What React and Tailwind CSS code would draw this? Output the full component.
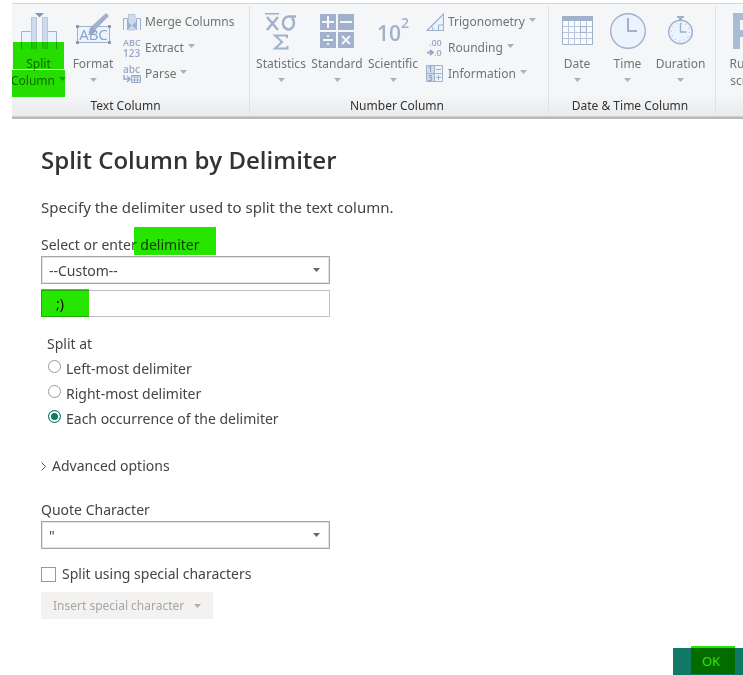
import React from "react";

const LINE = "#a1b1cb";
const FILL = "#eaf3fe";

function Caret({ className = "" }) {
  return (
    <svg width="7" height="4" viewBox="0 0 7 4" className={`shrink-0 ${className}`} aria-hidden="true">
      <path d="M0 0h7L3.500 4z" fill="currentColor" />
    </svg>
  );
}

function Highlight({ className }) {
  return <span aria-hidden="true" className={`pointer-events-none absolute bg-[#26e600] mix-blend-multiply ${className}`} />;
}

function SplitIcon() {
  return (
    <svg width="38" height="37" viewBox="0 0 38 37" aria-hidden="true">
      <path d="M1 19h10v17H1zM27 19h10v17H27z" fill={FILL} />
      <path d="M1.500 36V18.500h9M36.500 36V18.500h-9" fill="none" stroke={LINE} />
      <path d="M11.500 36V4.500h5V36M22.500 36V4.500h5V36" fill="#cedbed" stroke="#b7c6dd" />
      <path d="M15 0h9l-4.500 4.500z" fill="#8296b9" />
    </svg>
  );
}

function FormatIcon() {
  return (
    <svg width="36" height="37" viewBox="0 0 36 37" aria-hidden="true">
      <path d="M2.500 13.500h32v16h-32z" fill={FILL} stroke={LINE} />
      <text x="18.500" y="27" textAnchor="middle" fontFamily="Open Sans, sans-serif" fontSize="15" fill="#8da2c4">ABC</text>
      <path d="M1 12h3v3H1zM33 12h3v3h-3zM1 28h3v3H1zM33 28h3v3h-3z" fill="#879cc0" />
      <path d="M31 0l3 3-13 13-4-3z" fill={LINE} />
      <path d="M17 13l4 3c-1 5-4 6-8 6 2-2 0-6 4-9z" fill="#94a7c7" />
    </svg>
  );
}

function StatisticsIcon() {
  return (
    <svg width="34" height="37" viewBox="0 0 34 37" fill="none" stroke={LINE} strokeWidth="2.500" aria-hidden="true">
      <path d="M1 .750h14" strokeWidth="1.500" />
      <path d="M3 4l11 13M14 4L3 17" />
      <path d="M32 3.500h-7a5.500 6.500 0 1 0 3 1.500" />
      <path d="M23 25v-2.500H11l7 6.500-7 6.500h12.500v-2.500" strokeWidth="2" />
    </svg>
  );
}

function StandardIcon() {
  return (
    <svg width="34" height="37" viewBox="0 0 34 37" aria-hidden="true">
      <path d="M0 1h16v16H0zM18 1h16v16H18zM0 19h16v16H0zM18 19h16v16H18z" fill={LINE} />
      <path d="M2 9h12M8 3v12M20 9h12M3 27h10M22 23l8 8M30 23l-8 8" stroke="#f4f6f8" strokeWidth="2" />
      <path d="M7 22h2v2H7zM7 30h2v2H7z" fill="#f4f6f8" />
    </svg>
  );
}

function ScientificIcon() {
  return (
    <svg width="34" height="37" viewBox="0 0 34 37" className="overflow-visible" fontFamily="Open Sans, sans-serif" fontWeight="600" fill={LINE} aria-hidden="true">
      <text x="1" y="28" fontSize="21">10</text>
      <text x="25" y="15" fontSize="14">2</text>
    </svg>
  );
}

function DateIcon() {
  return (
    <svg width="31" height="37" viewBox="0 0 31 37" aria-hidden="true">
      <path d="M.5 3.500h30v28H.5z" fill="#f7fbff" stroke={LINE} />
      <path d="M0 3h31v5H0z" fill={LINE} />
      <path d="M6.500 8v24M12.500 8v24M18.500 8v24M24.500 8v24M1 13.500h29M1 19.500h29M1 25.500h29" stroke="#b7c6db" />
      <path d="M18.500 13.500h6v6h-6z" fill={FILL} stroke={LINE} />
    </svg>
  );
}

function TimeIcon() {
  return (
    <svg width="36" height="37" viewBox="0 0 36 37" aria-hidden="true">
      <circle cx="18" cy="18" r="17.300" fill={FILL} stroke={LINE} strokeWidth="1.400" />
      <path d="M18 5v13h9" fill="none" stroke={LINE} strokeWidth="2" />
    </svg>
  );
}

function DurationIcon() {
  return (
    <svg width="26" height="37" viewBox="0 0 26 37" aria-hidden="true">
      <path d="M9 3h7v2h-2v3h-3V5H9z" fill={LINE} />
      <circle cx="12.500" cy="19" r="11.800" fill={FILL} stroke={LINE} strokeWidth="1.500" />
      <circle cx="12.500" cy="19" r="9" fill="none" stroke={LINE} strokeDasharray="1 3.710" />
      <path d="M12.500 10v9h6" fill="none" stroke={LINE} strokeWidth="1.400" />
    </svg>
  );
}

function RIcon() {
  return (
    <svg width="27" height="37" viewBox="0 0 27 37" aria-hidden="true">
      <path d="M3.500 36V3.500H14a8 8 0 0 1 0 17H4M14 20l9 16" fill="none" stroke="#aabbd5" strokeWidth="7" />
    </svg>
  );
}

function MergeIcon() {
  return (
    <svg width="18" height="18" viewBox="0 0 18 18" aria-hidden="true">
      <path d="M.5 17V5.500h4V17M17.500 17V5.500h-4V17" fill={FILL} stroke={LINE} />
      <path d="M5.500 17V1.500h6.500V17z" fill="#cedbed" stroke="#b7c6dd" />
      <path d="M5 9l4 3.500L5 16zM13 9l-4 3.500 4 3.500z" fill={LINE} />
    </svg>
  );
}

function ExtractIcon() {
  return (
    <svg width="18" height="20" viewBox="0 0 18 20" className="overflow-visible" fontFamily="Open Sans, sans-serif" fontWeight="600" fill="#96a9c8" aria-hidden="true">
      <text x="0" y="8" fontSize="9">ABC</text>
      <text x="0" y="19" fontSize="10">123</text>
    </svg>
  );
}

function ParseIcon() {
  return (
    <svg width="18" height="20" viewBox="0 0 18 20" className="overflow-visible" fontFamily="Open Sans, sans-serif" fontWeight="600" fill="#96a9c8" aria-hidden="true">
      <text x="0" y="9" fontSize="10">abc</text>
      <path d="M1 11v4h5M4 12l3 3-3 3" fill="none" stroke="#96a9c8" strokeWidth="1.500" />
      <path d="M8.500 11.500h9v7h-9zM8 13h10M11.500 13v6M14.500 13v6M8 16h10" fill="none" stroke="#96a9c8" />
    </svg>
  );
}

function TrigIcon() {
  return (
    <svg width="18" height="18" viewBox="0 0 18 18" fill="none" stroke={LINE} aria-hidden="true">
      <path d="M1 17.500L17.500 1v16.500z" fill={FILL} strokeWidth="1.200" />
      <path d="M12.500 17v-5H17M5 13c2 1 2 3 2 4" />
    </svg>
  );
}

function RoundingIcon() {
  return (
    <svg width="18" height="20" viewBox="0 0 18 20" className="overflow-visible" fontFamily="Open Sans, sans-serif" fontWeight="600" fill="#96a9c8" aria-hidden="true">
      <text x="3" y="8" fontSize="9">.00</text>
      <text x="8" y="18" fontSize="9">.0</text>
      <path d="M1 14.500h6M4 12l3 2.500L4 17" fill="none" stroke="#96a9c8" strokeWidth="1.800" />
    </svg>
  );
}

function InfoIcon() {
  return (
    <svg width="18" height="18" viewBox="0 0 18 18" className="overflow-visible" aria-hidden="true">
      <path d="M.5.500h16v16H.500z" fill={FILL} stroke={LINE} />
      <path d="M1 1h7v15H1z" fill="#cedbed" />
      <path d="M8.500 1v15M1 8.500h15M10 4.500h5M10 12.500h5M12.500 10v5" stroke={LINE} />
      <g fontFamily="Open Sans, sans-serif" fontSize="8" fontWeight="600" fill="#879cc0">
        <text x="2" y="7">1</text>
        <text x="2" y="16">3</text>
      </g>
    </svg>
  );
}

function BigButton({ icon, label, className = "w-14" }) {
  return (
    <button type="button" className={`flex shrink-0 flex-col items-center whitespace-nowrap ${className}`}>
      {icon}
      <span className="mt-1.5 leading-4">{label}</span>
      <Caret className="mt-1.5 text-[#b0b0b0]" />
    </button>
  );
}

function SmallButton({ icon, label, caret = true }) {
  return (
    <button type="button" className="flex h-[26px] items-center gap-1 whitespace-nowrap">
      <span className="flex w-[18px] justify-center">{icon}</span>
      <span>{label}</span>
      {caret && <Caret className="mb-1 text-[#b0b0b0]" />}
    </button>
  );
}

function Group({ title, children, className }) {
  return (
    <section className={`relative flex shrink-0 flex-col justify-between pt-[7px] ${className}`}>
      <div className="flex items-start">{children}</div>
      <h2 className="text-center leading-4 text-[#333]">{title}</h2>
    </section>
  );
}

function Ribbon() {
  return (
    <div className="ml-3 mt-[3px] h-[116px] overflow-hidden border-b-2 border-t border-b-[#b8b8b8] border-t-[#d8d8d8] bg-linear-to-b from-[#f4f6f8] from-80% to-[#e9eaeb] font-['Noto_Sans','Open_Sans',sans-serif] text-xs text-[#737373]">
      <div className="flex h-[110px] divide-x divide-[#dfe2e5] pt-0.5">
        <Group title="Text Column" className="w-[238px] pr-2.5">
          <button type="button" className="relative flex w-[53px] shrink-0 flex-col items-center whitespace-nowrap">
            <SplitIcon />
            <span className="mt-1.5 leading-4">Split</span>
            <span className="mt-px flex items-center gap-1 leading-4">
              Column
              <Caret className="mb-1 text-[#b0b0b0]" />
            </span>
            <Highlight className="inset-x-px top-[29px] h-[27px]" />
            <Highlight className="inset-x-0 top-[57px] h-[27px]" />
          </button>
          <BigButton icon={<FormatIcon />} label="Format" />
          <div className="-mt-1 ml-0.5">
            <SmallButton icon={<MergeIcon />} label="Merge Columns" caret={false} />
            <SmallButton icon={<ExtractIcon />} label="Extract" />
            <SmallButton icon={<ParseIcon />} label="Parse" />
          </div>
        </Group>
        <Group title="Number Column" className="w-[299px] pr-1">
          <BigButton icon={<StatisticsIcon />} label="Statistics" className="ml-[3px] w-14" />
          <BigButton icon={<StandardIcon />} label="Standard" />
          <BigButton icon={<ScientificIcon />} label="Scientific" />
          <div className="-mt-1 ml-[5px]">
            <SmallButton icon={<TrigIcon />} label="Trigonometry" />
            <SmallButton icon={<RoundingIcon />} label="Rounding" />
            <SmallButton icon={<InfoIcon />} label="Information" />
          </div>
        </Group>
        <Group title="Date &amp; Time Column" className="w-[167px] pr-1">
          <BigButton icon={<DateIcon />} label="Date" className="ml-1 w-12" />
          <BigButton icon={<TimeIcon />} label="Time" className="w-[53px]" />
          <BigButton icon={<DurationIcon />} label="Duration" className="w-[53px]" />
        </Group>
        <Group title="" className="w-[60px]">
          <button type="button" className="flex w-[60px] flex-col items-center whitespace-nowrap">
            <RIcon />
            <span className="mt-1.5 leading-4">Run R</span>
            <span className="mt-px leading-4">script</span>
          </button>
        </Group>
      </div>
      <div className="h-[3px] border-b border-[#cfcfcf]" />
    </div>
  );
}

function SelectBox({ id, value }) {
  return (
    <div className="relative">
      <select
        id={id}
        defaultValue={value}
        className="block h-7 w-full appearance-none border border-[#a6a6a6] bg-white px-[7px] pt-px text-[#444] shadow-[inset_0_0_0_1px_#e3e3e3] outline-none"
      >
        <option>{value}</option>
      </select>
      <Caret className="pointer-events-none absolute right-2.5 top-3 text-[#666]" />
    </div>
  );
}

const splitOptions = ["Left-most delimiter", "Right-most delimiter", "Each occurrence of the delimiter"];

export default function App() {
  return (
    <div className="flow-root min-h-screen overflow-x-hidden bg-white font-['Noto_Sans','Open_Sans',sans-serif] text-sm text-[#444]">
      <Ribbon />
      <form className="pl-[41px]" onSubmit={(event) => event.preventDefault()}>
        <h1 className="mt-[23px] font-['Open_Sans','Noto_Sans',sans-serif] text-2xl font-semibold leading-9 text-[#333]">Split Column by Delimiter</h1>
        <p className="mt-[19px] text-[15px] leading-5">Specify the delimiter used to split the text column.</p>

        <div className="w-[289px]">
          <label htmlFor="delimiter" className="mt-[18px] block leading-5">
            Select or enter{" "}
            <span className="relative inline-block">
              delimiter
              <Highlight className="-left-1.5 -right-4 -top-2 h-7" />
            </span>
          </label>
          <div className="mt-px">
            <SelectBox id="delimiter" value="--Custom--" />
          </div>
          <div className="relative mt-1.5">
            <input
              aria-label="Custom delimiter"
              defaultValue=";)"
              className="block h-[27px] w-full border border-[#c0c0c0] bg-white px-3.5 text-black outline-none"
            />
            <Highlight className="-top-px bottom-0 left-0 w-12" />
          </div>

          <fieldset className="mt-[17px] pl-1.5">
            <legend className="leading-5">Split at</legend>
            <div className="mt-0.5">
              {splitOptions.map((option, index) => (
                <label key={option} className="flex h-[25px] items-center gap-[5px] pl-px">
                  <input
                    type="radio"
                    name="split-at"
                    defaultChecked={index === 2}
                    className="mb-1 size-[13px] shrink-0 appearance-none rounded-full border border-[#999] bg-white checked:border-[#117865] checked:bg-[#117865] checked:shadow-[inset_0_0_0_2px_white]"
                  />
                  {option}
                </label>
              ))}
            </div>
          </fieldset>

          <button type="button" aria-expanded="false" className="mt-[25px] flex items-center gap-1.5 leading-5">
            <svg width="5" height="9" viewBox="0 0 5 9" fill="none" stroke="#555" aria-hidden="true">
              <path d="M.5.500l4 4-4 4" />
            </svg>
            Advanced options
          </button>

          <label htmlFor="quote" className="mt-6 block leading-5">
            Quote Character
          </label>
          <div className="mt-px">
            <SelectBox id="quote" value={'"'} />
          </div>

          <label className="mt-[15px] flex items-center gap-1.5 leading-5">
            <input type="checkbox" className="size-[15px] appearance-none border border-[#999] bg-white checked:bg-[#117865]" />
            Split using special characters
          </label>
          <button type="button" disabled className="mt-2 flex h-[27px] items-center gap-2.5 bg-[#f3f2f1] px-3 text-xs text-[#a6a6a6]">
            Insert special character
            <Caret className="text-[#b0b0b0]" />
          </button>
        </div>

        <div className="mt-[29px] flex justify-end">
          <button type="submit" className="relative h-[27px] w-[70px] bg-[#117865] text-[13px] text-white">
            <span className="pl-1.5">OK</span>
            <Highlight className="-top-0.5 bottom-px left-[18px] right-2" />
          </button>
        </div>
      </form>
    </div>
  );
}
